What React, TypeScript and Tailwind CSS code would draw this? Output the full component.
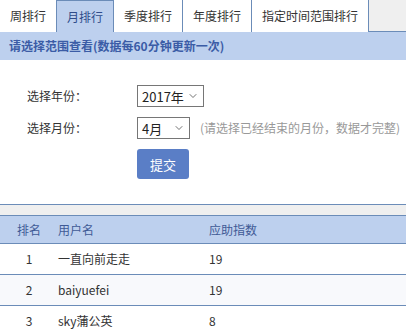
import { ChevronDown } from "lucide-react";

const tabs = ["周排行", "月排行", "季度排行", "年度排行", "指定时间范围排行"];

const rows = [
  { rank: 1, name: "一直向前走走", score: 19 },
  { rank: 2, name: "baiyuefei", score: 19 },
  { rank: 3, name: "sky蒲公英", score: 8 },
];

function FakeSelect({ value, width }: { value: string; width: string }) {
  return (
    <div
      className={`flex h-[22px] ${width} items-center justify-between border border-[#767676] bg-white pl-[4px] pr-[4px] text-[13px] leading-none text-[#222]`}
    >
      <span>{value}</span>
      <ChevronDown className="size-[12px] text-[#444]" strokeWidth={1.5} />
    </div>
  );
}

export default function App() {
  return (
    <div className="h-[332px] w-[406px] overflow-hidden bg-white font-['Noto_Sans_CJK_SC',sans-serif] text-[12px] text-[#333]">
      {/* tabs */}
      <div className="flex h-[32px] border-b border-[#6b8cb8] bg-[#efefef]">
        {tabs.map((t) => {
          const active = t === "月排行";
          return (
            <div
              key={t}
              className={`flex h-[32px] items-center border-r border-[#6b8cb8] px-[10px] leading-none ${
                active ? "border-t bg-[#bdd0ee] text-[#2f4c8a]" : "bg-white text-[#333]"
              }`}
            >
              {t}
            </div>
          );
        })}
      </div>

      {/* band */}
      <div className="flex h-[28px] items-center bg-[#bdd0ee] pl-[9px] font-bold leading-none text-[#3b5ca6]">
        请选择范围查看(数据每60分钟更新一次)
      </div>

      {/* form */}
      <div className="flex flex-col gap-[10px] pb-[25px] pl-[27px] pt-[25px]">
        <div className="flex items-center">
          <span className="w-[110px] leading-none text-[#333]">选择年份：</span>
          <FakeSelect value="2017年" width="w-[67px]" />
        </div>
        <div className="flex items-center">
          <span className="w-[110px] leading-none text-[#333]">选择月份：</span>
          <FakeSelect value="4月" width="w-[53px]" />
          <span className="ml-[10px] leading-none text-[#999]">(请选择已经结束的月份，数据才完整)</span>
        </div>
        <div className="flex">
          <div className="ml-[110px] flex h-[30px] w-[52px] items-center justify-center rounded-[3px] bg-[#5a7ec6] text-[13px] leading-none text-white">
            提交
          </div>
        </div>
      </div>

      {/* table */}
      <div className="h-[11px] border-t border-[#6b8cb8] bg-[#efefef]" />
      <div className="grid h-[29px] grid-cols-[58px_151px_1fr] items-center border-y border-[#6b8cb8] bg-[#bdd0ee] leading-none text-[#3f5a96]">
        <span className="text-center">排名</span>
        <span>用户名</span>
        <span>应助指数</span>
      </div>
      {rows.map((r, i) => (
        <div
          key={r.rank}
          className={`grid h-[31px] grid-cols-[58px_151px_1fr] items-center border-b border-[#6b8cb8] leading-none text-[#333] ${
            i % 2 === 1 ? "bg-[#f8f9fc]" : "bg-white"
          }`}
        >
          <span className="text-center">{r.rank}</span>
          <span>{r.name}</span>
          <span>{r.score}</span>
        </div>
      ))}
    </div>
  );
}
